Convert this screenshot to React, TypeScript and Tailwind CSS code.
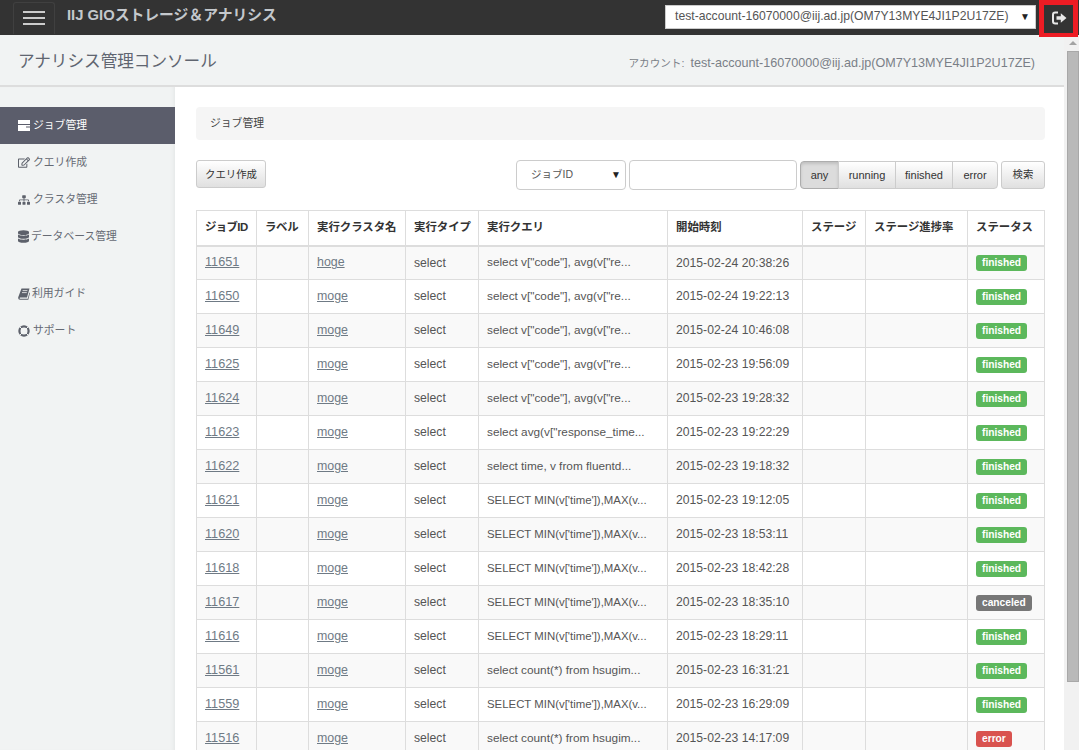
import { FaDatabase, FaSitemap, FaRegEdit } from "react-icons/fa";

const font = "font-['Liberation_Sans','Noto_Sans_CJK_JP',sans-serif]";

type Job = {
    id: string;
    cluster: string;
    query: string;
    started: string;
    status: string;
};

const jobs: Job[] = [
    { id: "11651", cluster: "hoge", query: 'select v["code"], avg(v["re...', started: "2015-02-24 20:38:26", status: "finished" },
    { id: "11650", cluster: "moge", query: 'select v["code"], avg(v["re...', started: "2015-02-24 19:22:13", status: "finished" },
    { id: "11649", cluster: "moge", query: 'select v["code"], avg(v["re...', started: "2015-02-24 10:46:08", status: "finished" },
    { id: "11625", cluster: "moge", query: 'select v["code"], avg(v["re...', started: "2015-02-23 19:56:09", status: "finished" },
    { id: "11624", cluster: "moge", query: 'select v["code"], avg(v["re...', started: "2015-02-23 19:28:32", status: "finished" },
    { id: "11623", cluster: "moge", query: 'select avg(v["response_time...', started: "2015-02-23 19:22:29", status: "finished" },
    { id: "11622", cluster: "moge", query: "select time, v from fluentd...", started: "2015-02-23 19:18:32", status: "finished" },
    { id: "11621", cluster: "moge", query: "SELECT MIN(v['time']),MAX(v...", started: "2015-02-23 19:12:05", status: "finished" },
    { id: "11620", cluster: "moge", query: "SELECT MIN(v['time']),MAX(v...", started: "2015-02-23 18:53:11", status: "finished" },
    { id: "11618", cluster: "moge", query: "SELECT MIN(v['time']),MAX(v...", started: "2015-02-23 18:42:28", status: "finished" },
    { id: "11617", cluster: "moge", query: "SELECT MIN(v['time']),MAX(v...", started: "2015-02-23 18:35:10", status: "canceled" },
    { id: "11616", cluster: "moge", query: "SELECT MIN(v['time']),MAX(v...", started: "2015-02-23 18:29:11", status: "finished" },
    { id: "11561", cluster: "moge", query: "select count(*) from hsugim...", started: "2015-02-23 16:31:21", status: "finished" },
    { id: "11559", cluster: "moge", query: "SELECT MIN(v['time']),MAX(v...", started: "2015-02-23 16:29:09", status: "finished" },
    { id: "11516", cluster: "moge", query: "select count(*) from hsugim...", started: "2015-02-23 14:17:09", status: "error" },
];

const badgeColors: Record<string, string> = {
    finished: "bg-[#5cb85c]",
    canceled: "bg-[#777777]",
    error: "bg-[#d9534f]",
};

const headers = [
    { label: "ジョブID", width: "w-[60px] tracking-[-0.6px]" },
    { label: "ラベル", width: "w-[52px] tracking-[-0.3px]" },
    { label: "実行クラスタ名", width: "w-[97px]" },
    { label: "実行タイプ", width: "w-[73px]" },
    { label: "実行クエリ", width: "w-[189px]" },
    { label: "開始時刻", width: "w-[135px]" },
    { label: "ステージ", width: "w-[63px]" },
    { label: "ステージ進捗率", width: "w-[102px]" },
    { label: "ステータス", width: "w-[77px]" },
];

function JobsIcon() {
    return (
        <svg className="h-[11px] w-[12px]" viewBox="0 0 12 11">
            <rect width="12" height="11" fill="#ffffff" />
            <rect x="0" y="4" width="12" height="1" fill="#5b5d6b" />
            <rect x="8" y="6.5" width="4" height="1" fill="#5b5d6b" />
        </svg>
    );
}

function BookIcon() {
    return (
        <svg className="h-[12px] w-[12px]" viewBox="0 0 12 12" fill="#5d616b">
            <path d="M3.5 0.5h8L9 9.5H2.2c-.7 0-.7 1.3 0 1.3h7.6l1.6-6.3.6.5-1.7 6.8H2C.5 11.8-.1 10.4.3 9z" />
            <path d="M4.6 2.6h4.8M4 4.6h4.8" stroke="#f1f3f3" strokeWidth="0.8" />
        </svg>
    );
}

function RingIcon() {
    return (
        <svg className="size-[12px]" viewBox="0 0 12 12" fill="none" stroke="#5d616b">
            <circle cx="6" cy="6" r="4.6" strokeWidth="2.2" />
            <path d="M2 2l2.4 2.4M10 2L7.6 4.4M2 10l2.4-2.4M10 10L7.6 7.6" stroke="#f1f3f3" strokeWidth="1" />
        </svg>
    );
}

const navItems = [
    { label: "クエリ作成", slot: "w-[12px] mr-[3px]", icon: <FaRegEdit className="size-[13px]" /> },
    { label: "クラスタ管理", slot: "w-[12px] mr-[3px]", icon: <FaSitemap className="size-[12px]" /> },
    { label: "データベース管理", slot: "w-[11px] mr-[2px]", icon: <FaDatabase className="size-[13px]" /> },
];

const navItemsBottom = [
    { label: "利用ガイド", slot: "w-[12px] mr-[2px]", icon: <BookIcon /> },
    { label: "サポート", slot: "w-[12px] mr-[3px]", icon: <RingIcon /> },
];

function SelectArrow() {
    return <span className="text-[10px] leading-none text-[#222]">▼</span>;
}

function LogoutIcon() {
    return (
        <svg className="size-[16px]" viewBox="0 0 16 16" fill="none">
            <path d="M7 2.5H4.2C3 2.5 2 3.5 2 4.7v6.6c0 1.2 1 2.2 2.2 2.2H7" stroke="#e8e8e8" strokeWidth="2" />
            <path d="M5.5 6.2h4.3V3.2L15.5 8l-5.7 4.8v-3H5.5z" fill="#e8e8e8" />
        </svg>
    );
}

function NavRow({ label, icon, slot }: { label: string; icon: React.ReactNode; slot: string }) {
    return (
        <a className="flex h-[37px] items-center pl-[18px] text-[10.8px] text-[#666a73]" href="#">
            <span className={`flex justify-center text-[#5d616b] ${slot}`}>{icon}</span>
            {label}
        </a>
    );
}

export default function App() {
    return (
        <div className={`flex h-[750px] flex-col overflow-hidden bg-white ${font}`}>
            <header className="flex h-[35px] shrink-0 items-center bg-[#333333]">
                <button className="ml-[13px] flex h-[32px] w-[42px] flex-col items-center justify-center gap-[4px] rounded-t-[3px] border border-b-0 border-[#404040]" type="button">
                    <span className="h-[2px] w-[22px] bg-[#cccccc]" />
                    <span className="h-[2px] w-[22px] bg-[#cccccc]" />
                    <span className="h-[2px] w-[22px] bg-[#cccccc]" />
                </button>
                <div className="mb-[4px] ml-[12px] text-[14.8px] font-bold text-[#c4c8cc]">IIJ GIOストレージ＆アナリシス</div>
                <div className="mb-[2px] ml-auto flex h-[24px] w-[371px] items-center justify-between border border-[#cccccc] bg-white pl-[9px] pr-[5px] text-[12.2px] text-[#555555]">
                    test-account-16070000@iij.ad.jp(OM7Y13MYE4JI1P2U17ZE)
                    <SelectArrow />
                </div>
                <div className="ml-[3px] mr-px flex h-[37px] w-[39px] shrink-0 translate-y-px items-center justify-center border-[5px] border-b-[4px] border-[#ed1c24] pb-[3px]">
                    <LogoutIcon />
                </div>
            </header>

            <div className="flex min-h-0 flex-1">
                <div className="flex min-w-0 flex-1 flex-col">
                    <div className="flex h-[52px] shrink-0 items-center justify-between border-b-2 border-[#dddddd] bg-[#f1f3f3] pl-[18px] pr-[29px] pt-[4px]">
                        <h1 className="text-[16.6px] text-[#606570]">アナリシス管理コンソール</h1>
                        <div className="mt-[2px] flex items-baseline text-[12.6px] text-[#7a7f87]">
                            <span className="mr-[6px] text-[10.6px]">アカウント:</span>
                            test-account-16070000@iij.ad.jp(OM7Y13MYE4JI1P2U17ZE)
                        </div>
                    </div>

                    <div className="flex min-h-0 flex-1">
                        <aside className="w-[175px] shrink-0 bg-[#f1f3f3] pt-[20px] shadow-[inset_-4px_0_4px_-3px_#e3e5e5]">
                            <a className="flex h-[37px] items-center gap-[3px] bg-[#5b5d6b] pl-[18px] text-[10.8px] text-white" href="#">
                                <JobsIcon />
                                ジョブ管理
                            </a>
                            {navItems.map((item) => (
                                <NavRow key={item.label} label={item.label} icon={item.icon} slot={item.slot} />
                            ))}
                            <div className="h-[20px]" />
                            {navItemsBottom.map((item) => (
                                <NavRow key={item.label} label={item.label} icon={item.icon} slot={item.slot} />
                            ))}
                        </aside>

                        <main className="min-w-0 flex-1 pl-[21px] pr-[19px] pt-[20px]">
                            <div className="flex h-[33px] items-center rounded-[4px] bg-[#f5f5f5] pb-[1px] pl-[14px] text-[10.8px] text-[#444444]">ジョブ管理</div>

                            <div className="mt-[20px] flex h-[30px] items-center">
                                <button className="mb-[2px] h-[28px] w-[70px] rounded-[3px] border border-[#cccccc] bg-gradient-to-b from-white to-[#e0e0e0] pt-px text-[10.4px] text-[#333333]" type="button">
                                    クエリ作成
                                </button>
                                <div className="ml-auto flex h-[30px] w-[110px] items-center justify-between rounded-[4px] border border-[#cccccc] bg-white pl-[14px] pr-[4px] text-[10.5px] text-[#555555]">
                                    ジョブID
                                    <SelectArrow />
                                </div>
                                <input className="ml-[3px] h-[30px] w-[168px] rounded-[4px] border border-[#cccccc] bg-white" />
                                <div className="ml-[3px] flex h-[28px] text-[11px] text-[#333333]">
                                    <span className="flex w-[39px] items-center justify-center rounded-l-[4px] border border-[#adadad] bg-[#dcdcdc] shadow-[inset_0_2px_3px_#00000020]">any</span>
                                    <span className="-ml-px flex w-[58px] items-center justify-center border border-[#cccccc] bg-gradient-to-b from-white to-[#e0e0e0]">running</span>
                                    <span className="-ml-px flex w-[58px] items-center justify-center border border-[#cccccc] bg-gradient-to-b from-white to-[#e0e0e0]">finished</span>
                                    <span className="-ml-px flex w-[46px] items-center justify-center rounded-r-[4px] border border-[#cccccc] bg-gradient-to-b from-white to-[#e0e0e0]">error</span>
                                </div>
                                <button className="ml-[3px] h-[28px] w-[44px] rounded-[3px] border border-[#cccccc] bg-gradient-to-b from-white to-[#e0e0e0] text-[10.4px] text-[#333333]" type="button">
                                    検索
                                </button>
                            </div>

                            <table className="mt-[20px] w-[848px] table-fixed border-collapse text-[12.2px]">
                                <thead>
                                    <tr className="h-[35px]">
                                        {headers.map((h) => (
                                            <th key={h.label} className={`${h.width} whitespace-nowrap border border-b-2 border-[#dddddd] px-[8px] text-left text-[11.4px] font-bold text-[#333333]`}>
                                                {h.label}
                                            </th>
                                        ))}
                                    </tr>
                                </thead>
                                <tbody>
                                    {jobs.map((job, i) => (
                                        <tr key={job.id} className={`h-[34px] text-[#555555] ${i % 2 === 0 ? "bg-[#f9f9f9]" : "bg-white"}`}>
                                            <td className="border border-[#dddddd] px-[8px]">
                                                <a className="text-[12.7px] text-[#6f7a85] underline" href="#">{job.id}</a>
                                            </td>
                                            <td className="border border-[#dddddd] px-[8px]" />
                                            <td className="border border-[#dddddd] px-[8px]">
                                                <a className="text-[12.4px] text-[#6f7a85] underline" href="#">{job.cluster}</a>
                                            </td>
                                            <td className="border border-[#dddddd] px-[8px]">select</td>
                                            <td className={`whitespace-nowrap border border-[#dddddd] px-[8px] ${job.query.startsWith("SELECT") ? "text-[11.4px]" : "text-[11.8px]"}`}>{job.query}</td>
                                            <td className="whitespace-nowrap border border-[#dddddd] px-[8px]">{job.started}</td>
                                            <td className="border border-[#dddddd] px-[8px]" />
                                            <td className="border border-[#dddddd] px-[8px]" />
                                            <td className="border border-[#dddddd] px-[8px] pb-[2px]">
                                                <span className={`mt-[2px] inline-block rounded-[3px] px-[6px] py-[2px] align-middle text-[10.2px] font-bold leading-[12px] text-white ${badgeColors[job.status]}`}>
                                                    {job.status}
                                                </span>
                                            </td>
                                        </tr>
                                    ))}
                                </tbody>
                            </table>
                        </main>
                    </div>
                </div>

                <div className="flex w-[15px] shrink-0 flex-col items-end bg-[#f1f1f1]">
                    <span className="mr-[2px] mt-[6px] h-0 w-0 border-x-[4px] border-b-[4px] border-x-transparent border-b-[#a3a3a3]" />
                    <div className="mt-[6px] h-[631px] w-[12px] border border-[#a8a8a8] bg-[#b9b9b9]" />
                </div>
            </div>
        </div>
    );
}
